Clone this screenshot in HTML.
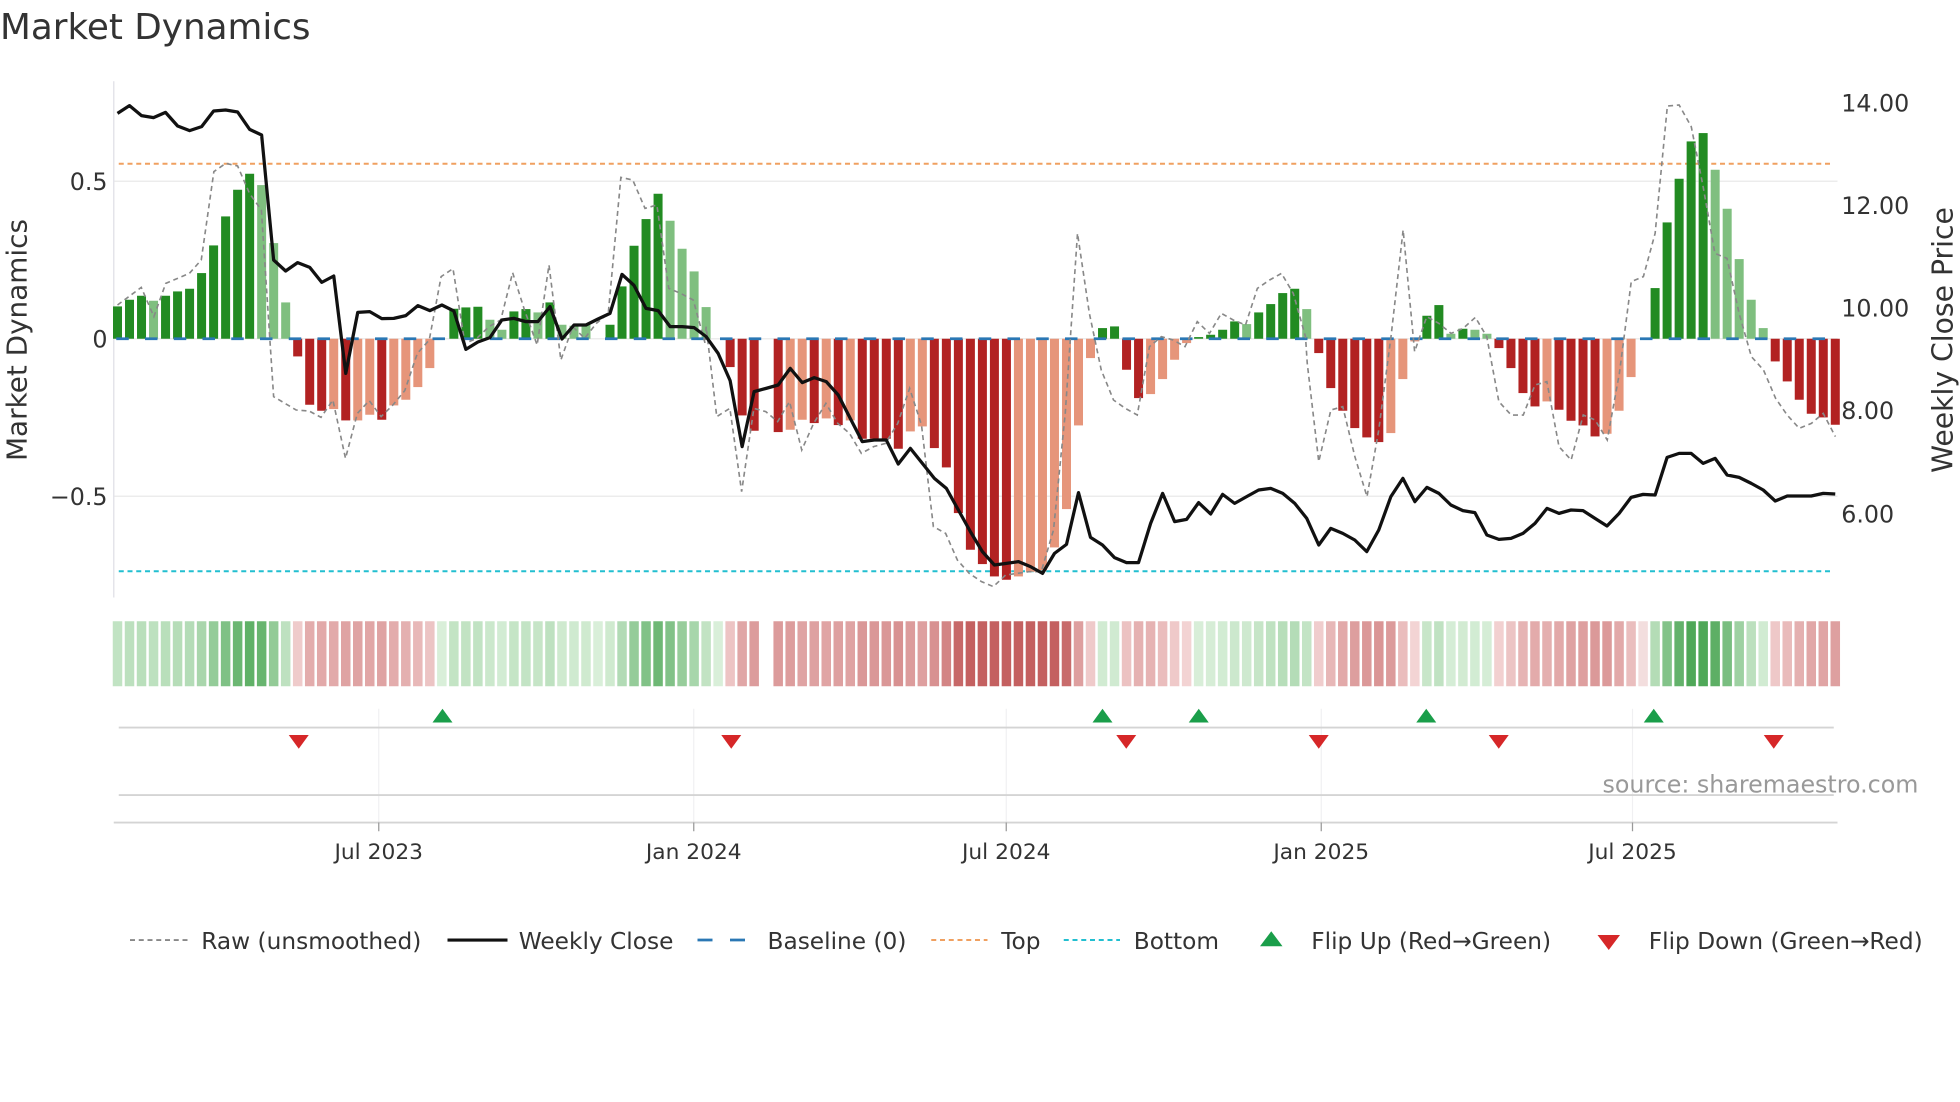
<!DOCTYPE html>
<html><head><meta charset="utf-8"><style>
html,body{margin:0;padding:0;background:#fff;}
svg{display:block;}
text{font-family:"DejaVu Sans","Liberation Sans",sans-serif;fill:#333;}
</style></head><body>
<svg id="s" width="1960" height="1102" viewBox="0 0 1568 881.6" xmlns="http://www.w3.org/2000/svg">
<rect width="1568" height="881.6" fill="#fff"/>
<text x="0" y="31" font-size="28.6">Market Dynamics</text>
<g stroke="#ececec" stroke-width="1.2">
<line x1="91" y1="145" x2="1470" y2="145"/><line x1="91" y1="271" x2="1470" y2="271"/><line x1="91" y1="397" x2="1470" y2="397"/>
</g>
<line x1="91" y1="65" x2="91" y2="478" stroke="#e4e4ea" stroke-width="1.2"/>
<line x1="95" y1="131" x2="1465" y2="131" stroke="#f0a060" stroke-width="1.6" stroke-dasharray="4,3"/>
<line x1="95" y1="457" x2="1465" y2="457" stroke="#22bfd0" stroke-width="1.6" stroke-dasharray="4,3"/>
<g id="bars"></g>
<g id="heat"></g>
<g id="lines"></g>
<g font-size="19" text-anchor="end">
<text x="86" y="152">0.5</text><text x="86" y="278">0</text><text x="86" y="404">−0.5</text>
</g>
<g font-size="19">
<text x="1473" y="89">14.00</text><text x="1473" y="171">12.00</text><text x="1473" y="253">10.00</text><text x="1473" y="335">8.00</text><text x="1473" y="418">6.00</text>
</g>
<text transform="translate(21,272) rotate(-90)" font-size="22.3" text-anchor="middle">Market Dynamics</text>
<text transform="translate(1562,272) rotate(-90)" font-size="22.6" text-anchor="middle">Weekly Close Price</text>
<g stroke="#f0f0f2" stroke-width="1">
<line x1="303" y1="567" x2="303" y2="658"/><line x1="555" y1="567" x2="555" y2="658"/><line x1="805" y1="567" x2="805" y2="658"/><line x1="1057" y1="567" x2="1057" y2="658"/><line x1="1306" y1="567" x2="1306" y2="658"/>
</g>
<line x1="95" y1="582" x2="1467" y2="582" stroke="#d4d4d4" stroke-width="1.5"/>
<line x1="95" y1="636" x2="1467" y2="636" stroke="#d4d4d4" stroke-width="1.5"/>
<line x1="91" y1="658" x2="1470" y2="658" stroke="#d4d4d4" stroke-width="1.5"/>
<g stroke="#999" stroke-width="1">
<line x1="303" y1="658" x2="303" y2="665"/><line x1="555" y1="658" x2="555" y2="665"/><line x1="805" y1="658" x2="805" y2="665"/><line x1="1057" y1="658" x2="1057" y2="665"/><line x1="1306" y1="658" x2="1306" y2="665"/>
</g>
<g font-size="17.4" text-anchor="middle">
<text x="303" y="687">Jul 2023</text><text x="555" y="687">Jan 2024</text><text x="805" y="687">Jul 2024</text><text x="1057" y="687">Jan 2025</text><text x="1306" y="687">Jul 2025</text>
</g>
<g id="flips"></g>
<text x="1282" y="634" font-size="19" style="fill:#999">source: sharemaestro.com</text>
<g font-size="18.6">
<line x1="104" y1="752" x2="150" y2="752" stroke="#888" stroke-width="1.5" stroke-dasharray="4,3"/>
<text x="161" y="759">Raw (unsmoothed)</text>
<line x1="358" y1="752" x2="406" y2="752" stroke="#111" stroke-width="2.5"/>
<text x="415" y="759">Weekly Close</text>
<line x1="558" y1="752" x2="603" y2="752" stroke="#2a77b4" stroke-width="2.2" stroke-dasharray="12,14"/>
<text x="614" y="759">Baseline (0)</text>
<line x1="745" y1="752" x2="790" y2="752" stroke="#f0a060" stroke-width="1.6" stroke-dasharray="4,3"/>
<text x="801" y="759">Top</text>
<line x1="851" y1="752" x2="896" y2="752" stroke="#22bfd0" stroke-width="1.6" stroke-dasharray="4,3"/>
<text x="907" y="759">Bottom</text>
<polygon points="1008,757 1026,757 1017,745" fill="#1a9e4a"/>
<text x="1049" y="759">Flip Up (Red→Green)</text>
<polygon points="1278,748 1296,748 1287,760" fill="#d62728"/>
<text x="1319" y="759">Flip Down (Green→Red)</text>
</g>
</svg>
<script>
var NS="http://www.w3.org/2000/svg";
function el(p,t,a){var e=document.createElementNS(NS,t);for(var k in a)e.setAttribute(k,a[k]);p.appendChild(e);return e;}
var B="680G 660G 648G 663g 648G 635G 627G 580G 497G 410G 330G 282G 316g 490g 668g 830R 975R 993R 988r 1022R 1022r 1005r 1020R 977r 960r 922r 865r 777z 687G 683G 681G 720g 750g 695G 688G 698g 668G 735g 738g 735g 777z 735G 620G 498G 418G 342G 423g 507g 575g 682g 777z 862R 1007R 1053R 777z 1057R 1050r 1020r 1030R 1016r 1036R 1022r 1077R 1077R 1077R 1107R 1055r 1040r 1105R 1163R 1300R 1410R 1453R 1490R 1500R 1490r 1476r 1472r 1403r 1288r 1037r 835r 745G 740G 870R 955R 943r 898r 840r 790r 772G 765G 750G 725G 733g 698G 673G 640G 627G 688g 820R 925R 993R 1045R 1073R 1087R 1060r 898r 785r 708G 676G 762g 747G 750g 762g 805R 865R 940R 980R 965r 990R 1023R 1037R 1070R 1062r 993r 892r 777z 625G 428G 297G 185G 160G 270g 387g 538g 660g 745g 845R 905R 960R 1002R 1013R 1035R".split(" ");
var X=function(i){return 94+i*9.61;};
var bars=document.getElementById("bars"),heat=document.getElementById("heat");
var col={G:"#228b22",g:"#7fbf7f",R:"#b22222",r:"#e6957a"};
function mix(a,b,t){var r="#";for(var k=0;k<3;k++){var x=parseInt(a.substr(1+2*k,2),16),y=parseInt(b.substr(1+2*k,2),16);var v=Math.round(x+(y-x)*t).toString(16);r+=(v.length<2?"0":"")+v;}return r;}
B.forEach(function(s,i){var zy=parseFloat(s),t=s.slice(-1);var h=(777-zy)/3.75;var x=X(i);
 if(t!="z"){el(bars,"rect",{x:x-3.6,y:h>0?271-h:271,width:7.2,height:Math.abs(h),fill:col[t]});}
 if(i==54)return;
 var v=Math.min(1,Math.abs(h)/150);var c;
 if(t=="G"||t=="g"||(t=="z"&&i!=127))c=mix("#d9efd9","#4fa858",v);else c=mix("#f4d6d6","#c46060",v);
 if(t=="z"&&i==127)c="#f3dede";
 el(heat,"rect",{x:x-3.8,y:497,width:7.6,height:52,fill:c});
});
var lines=document.getElementById("lines");
el(lines,"line",{x1:93,y1:271,x2:1467,y2:271,stroke:"#2a77b4","stroke-width":2.2,"stroke-dasharray":"10,13"});
function z1(zx){return (zx-48)/30.4;} function z2(zx){return 49+(zx-18)/30.4;} function z3(zx){return 100+(zx-52)/33.6;}
function pts(arr,f){return arr.map(function(p){return X(f(p[0])).toFixed(1)+","+(64+p[1]/3.75).toFixed(1);}).join(" ");}
var r1=[[48,675],[108,622],[140,710],[170,610],[230,580],[260,540],[292,275],[322,250],[352,258],[382,340],[412,390],[443,950],[500,990],[533,993],[563,1012],[593,960],[625,1135],[655,1000],[685,962],[715,1010],[745,975],[775,932],[807,820],[837,780],[867,590],[897,566],[927,790],[957,775],[988,740],[1018,720],[1048,578],[1078,690],[1110,795],[1140,555],[1170,840],[1200,740],[1230,775],[1260,730],[1290,700],[1322,292],[1352,300],[1383,385],[1413,375],[1443,625],[1473,640],[1505,660],[1535,790]];
var r2=[[18,740],[45,1010],[78,985],[108,1235],[139,985],[169,995],[199,1025],[229,965],[260,1110],[290,1030],[321,970],[351,1030],[381,1060],[411,1120],[442,1100],[472,1090],[503,1030],[533,925],[563,1035],[593,1340],[624,1360],[654,1440],[684,1480],[715,1505],[745,1520],[776,1485],[806,1480],[836,1475],[866,1475],[897,1350],[927,1000],[958,460],[988,700],[1018,870],[1049,960],[1079,985],[1109,1005],[1140,800],[1170,770],[1200,780],[1230,800],[1261,725],[1292,760],[1322,700],[1352,720],[1383,735],[1413,625],[1444,600],[1474,580],[1504,640],[1535,770]];
var r3=[[20,850],[52,1145],[86,990],[119,980],[153,1130],[187,1250],[220,1050],[254,770],[288,450],[320,815],[354,710],[388,730],[422,760],[456,745],[490,712],[522,770],[556,965],[590,1005],[624,1005],[657,915],[690,905],[724,1100],[758,1140],[792,1005],[825,1020],[859,1080],[893,880],[926,605],[960,590],[993,460],[1027,78],[1060,75],[1094,140],[1127,320],[1160,520],[1194,535],[1228,700],[1262,830],[1296,870],[1330,955],[1362,1005],[1396,1045],[1430,1030],[1463,1000],[1497,1070]];
el(lines,"polyline",{points:pts(r1,z1)+" "+pts(r2,z2)+" "+pts(r3,z3),fill:"none",stroke:"#888","stroke-width":1.3,"stroke-dasharray":"4,3"});
var p1=[100,77,107,113,97,138,152,140,93,90,96,148,165,540,573,548,562,607,588,880,697,695,716,715,707,677,692,675,693,808,786,773,720,715,725,725,680,777,735,735,717,700,583,616,685,692,740,740,743,770,820];
var p2=[902,1100,935,925,915,865,908,893,905,945,1015,1085,1080,1080,1152,1105,1150,1195,1225,1290,1355,1415,1455,1450,1445,1460,1480,1420,1393,1238,1372,1395,1433,1448,1448,1330,1240,1325,1318,1268,1302,1243,1270,1250,1230,1225,1240,1270,1315];
var p3=[1395,1345,1360,1380,1415,1350,1250,1195,1265,1222,1240,1275,1292,1298,1365,1378,1375,1360,1330,1285,1300,1290,1292,1315,1338,1300,1252,1243,1245,1132,1120,1120,1150,1135,1185,1192,1210,1230,1263,1248,1248,1248,1240,1242];
var P=p1.concat(p2,p3);
el(lines,"polyline",{points:P.map(function(zy,i){return X(i).toFixed(1)+","+(64+zy/3.75).toFixed(1);}).join(" "),fill:"none",stroke:"#111","stroke-width":2.6,"stroke-linejoin":"round"});
var fl=document.getElementById("flips");
[354,882,959,1141,1323].forEach(function(x){el(fl,"polygon",{points:(x-8)+",578 "+(x+8)+",578 "+x+",567",fill:"#1a9e4a"});});
[239,585,901,1055,1199,1419].forEach(function(x){el(fl,"polygon",{points:(x-8)+",588 "+(x+8)+",588 "+x+",599",fill:"#d62728"});});
</script>
</body></html>
